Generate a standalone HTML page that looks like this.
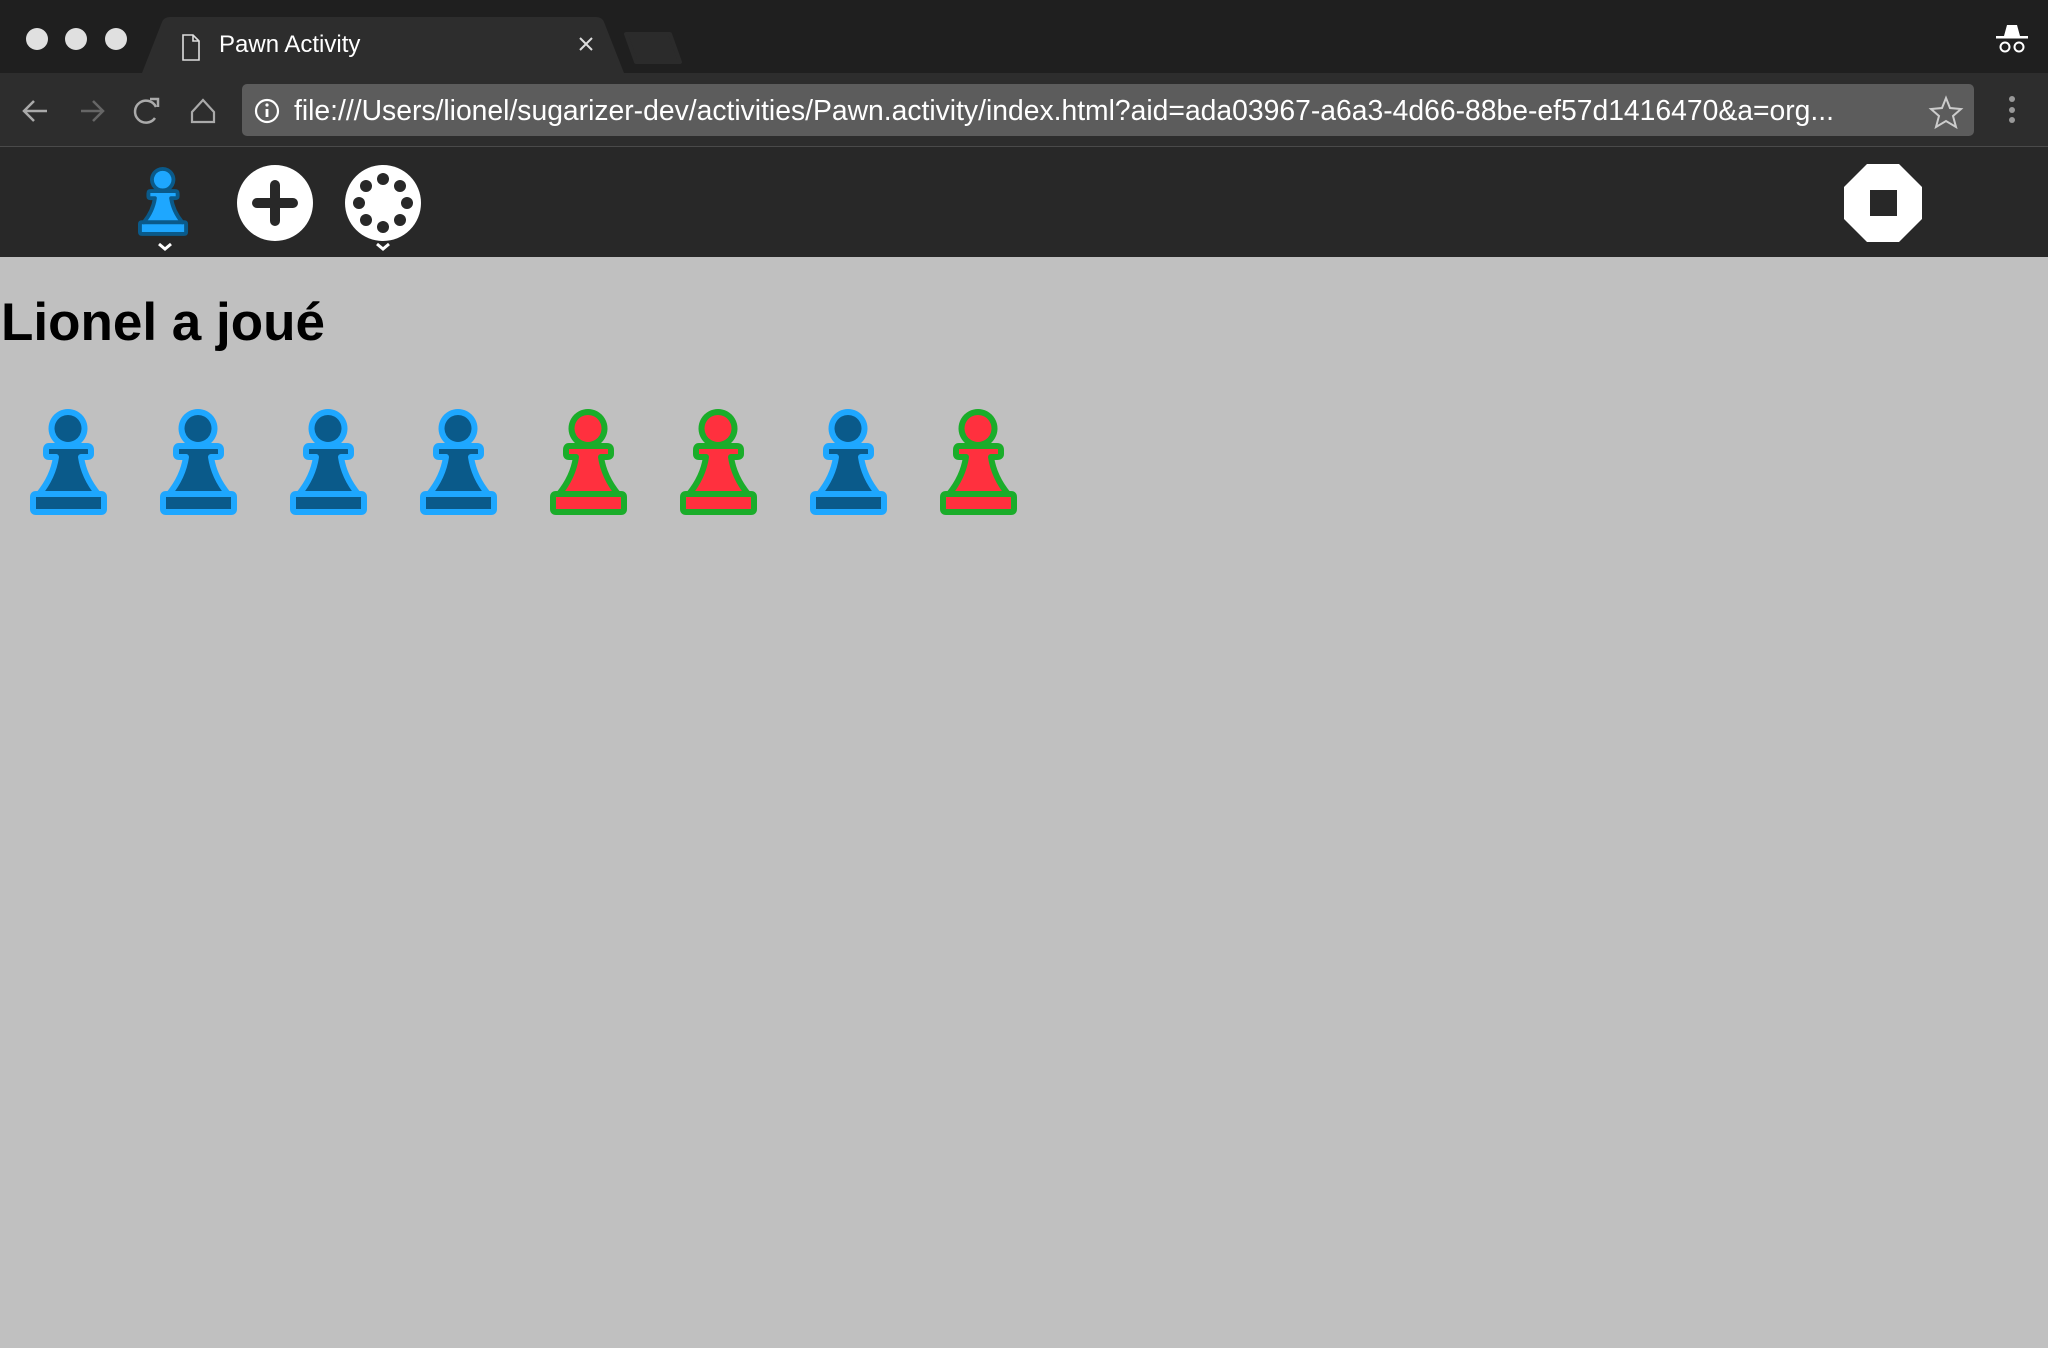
<!DOCTYPE html>
<html><head><meta charset="utf-8"><style>
*{margin:0;padding:0;box-sizing:border-box}
body{width:2048px;height:1348px;overflow:hidden;background:#c0c0c0;font-family:"Liberation Sans",sans-serif;position:relative}
.abs{position:absolute}
</style></head><body>
<div class="abs" style="left:0;top:0;width:2048px;height:73px;background:#1f1f1f"></div>
<div class="abs" style="left:26px;top:28px;width:22px;height:22px;border-radius:50%;background:#e0e0e0"></div>
<div class="abs" style="left:65px;top:28px;width:22px;height:22px;border-radius:50%;background:#e0e0e0"></div>
<div class="abs" style="left:105px;top:28px;width:22px;height:22px;border-radius:50%;background:#e0e0e0"></div>
<svg class="abs" style="left:0;top:0" width="2048" height="147">
<path d="M142 73 L162 22 Q164 17 170 17 L596 17 Q602 17 604 22 L624 73 Z" fill="#2d2d2d"/>
<path d="M626 34 L670 34 L680 62 L636 62 Z" fill="#2b2b2b" stroke="#2b2b2b" stroke-linejoin="round" stroke-width="4"/>
<path d="M183 35 h10 l6 6 v19 h-16 z M193 35 v6 h6" fill="none" stroke="#ddd" stroke-width="1.6"/>
<path d="M580 38 l12 12 M592 38 l-12 12" stroke="#ddd" stroke-width="2"/>
<rect x="0" y="73" width="2048" height="74" fill="#2d2d2d"/>
<rect x="0" y="146" width="2048" height="1" fill="#4a4a4a"/>
<rect x="242" y="84" width="1732" height="52" rx="5" fill="#5c5c5c"/>
<path d="M47 111 H24 M34 101 l-10 10 10 10" fill="none" stroke="#aaa" stroke-width="2.5"/>
<path d="M81 111 H103 M93 101 l10 10 -10 10" fill="none" stroke="#666" stroke-width="2.5"/>
<path d="M156 107 A11 11 0 1 0 155 118" fill="none" stroke="#aaa" stroke-width="2.5"/>
<path d="M150 99 l8 0 0 8" fill="none" stroke="#aaa" stroke-width="2.5"/>
<path d="M192 112 L203 100 L214 112 V122 H192 Z" fill="none" stroke="#aaa" stroke-width="2.2"/>
<circle cx="267" cy="111" r="11" fill="none" stroke="#fff" stroke-width="2.2"/>
<rect x="265.6" y="109" width="2.8" height="8" fill="#fff"/><circle cx="267" cy="105" r="1.6" fill="#fff"/>
<path d="M1946 98 l4 10 11 1 -8 7 3 11 -10 -6 -10 6 3 -11 -8 -7 11 -1 z" fill="none" stroke="#ccc" stroke-width="2"/>
<circle cx="2012" cy="99" r="3" fill="#999"/><circle cx="2012" cy="110" r="3" fill="#999"/><circle cx="2012" cy="120" r="3" fill="#999"/>
<path d="M2004 36 l3 -11 h10 l3 11 z" fill="#fff"/><rect x="1996" y="36" width="32" height="2.5" fill="#fff"/>
<circle cx="2005" cy="47" r="4.5" fill="none" stroke="#fff" stroke-width="2"/><circle cx="2019" cy="47" r="4.5" fill="none" stroke="#fff" stroke-width="2"/>
</svg>
<div class="abs" style="left:219px;top:31px;color:#fff;font-size:24px">Pawn Activity</div>
<div class="abs" style="left:294px;top:94px;color:#fff;font-size:28.3px;white-space:nowrap">file:///Users/lionel/sugarizer-dev/activities/Pawn.activity/index.html?aid=ada03967-a6a3-4d66-88be-ef57d1416470&amp;a=org...</div>
<div class="abs" style="left:0;top:147px;width:2048px;height:110px;background:#282828"></div>
<svg class="abs" style="left:0;top:147px" width="2048" height="110">
<defs>
<path id="pw" d="M38 3 A16.5 16.5 0 1 0 38.01 3 Z M19 37 H57 Q61 37 61 41 V45 Q61 48 57 48 H51 Q54 68 68 85 H71 Q74 85 74 88 V100 Q74 103 71 103 H6 Q3 103 3 100 V88 Q3 85 6 85 H9 Q23 68 26 48 H19 Q16 48 16 45 V41 Q16 37 19 37 Z"/>
<path id="dv" d="M8 85 H69"/>
</defs>
<g transform="translate(138,20) scale(0.65)"><use href="#pw" fill="#1ea7ff" stroke="#0a5a8a" stroke-width="6" stroke-linejoin="round"/><use href="#dv" stroke="#0a5a8a" stroke-width="6"/></g>
<path d="M159 97 l6 5 6 -5" fill="none" stroke="#fff" stroke-width="3"/>
<circle cx="275" cy="56" r="38" fill="#fff"/>
<path d="M257 56 H293 M275 38 V74" stroke="#282828" stroke-width="10" stroke-linecap="round"/>
<circle cx="383" cy="56" r="38" fill="#fff"/>
<g fill="#282828">
<circle cx="383" cy="32" r="6"/><circle cx="383" cy="80" r="6"/><circle cx="359" cy="56" r="6"/><circle cx="407" cy="56" r="6"/>
<circle cx="366" cy="39" r="6"/><circle cx="400" cy="39" r="6"/><circle cx="366" cy="73" r="6"/><circle cx="400" cy="73" r="6"/>
</g>
<path d="M377 97 l6 5 6 -5" fill="none" stroke="#fff" stroke-width="3"/>
<path d="M1867 17 H1899 L1922 40 V72 L1899 95 H1867 L1844 72 V40 Z" fill="#fff"/>
<rect x="1870" y="43" width="27" height="26" fill="#282828"/>
</svg>
<div class="abs" style="left:1px;top:292px;font-size:53px;font-weight:bold;color:#000">Lionel a joué</div>
<svg class="abs" style="left:0;top:406px" width="1100" height="112">
<g fill="#0a5a8a" stroke="#1ea7ff" stroke-width="6" stroke-linejoin="round">
<g transform="translate(30,3)"><use href="#pw"/><use href="#dv"/></g>
<g transform="translate(160,3)"><use href="#pw"/><use href="#dv"/></g>
<g transform="translate(290,3)"><use href="#pw"/><use href="#dv"/></g>
<g transform="translate(420,3)"><use href="#pw"/><use href="#dv"/></g>
<g transform="translate(810,3)"><use href="#pw"/><use href="#dv"/></g>
</g>
<g fill="#ff303e" stroke="#1aad2a" stroke-width="6" stroke-linejoin="round">
<g transform="translate(550,3)"><use href="#pw"/><use href="#dv"/></g>
<g transform="translate(680,3)"><use href="#pw"/><use href="#dv"/></g>
<g transform="translate(940,3)"><use href="#pw"/><use href="#dv"/></g>
</g>
</svg>
</body></html>
